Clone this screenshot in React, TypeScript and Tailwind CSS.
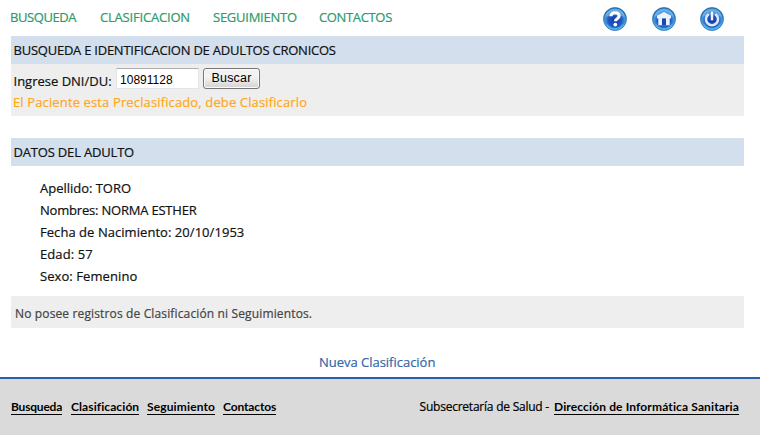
import type { ReactNode } from "react";

const nav = [
  { label: "BUSQUEDA", cls: "w-[90px] tracking-[-0.43px]" },
  { label: "CLASIFICACION", cls: "w-[113px] tracking-[-0.19px]" },
  { label: "SEGUIMIENTO", cls: "w-[106px] tracking-[-0.25px]" },
  { label: "CONTACTOS", cls: "tracking-[-0.35px]" },
];

const patient = [
  { text: "Apellido: TORO", cls: "tracking-[-0.02px]" },
  { text: "Nombres: NORMA ESTHER", cls: "tracking-[-0.2px]" },
  { text: "Fecha de Nacimiento: 20/10/1953", cls: "tracking-[0.05px]" },
  { text: "Edad: 57", cls: "tracking-[0.08px]" },
  { text: "Sexo: Femenino", cls: "tracking-[0.08px]" },
];

const footerLinks = [
  { label: "Busqueda", cls: "w-[60px] tracking-[-0.2px]" },
  { label: "Clasificación", cls: "w-[76px] tracking-[0.09px]" },
  { label: "Seguimiento", cls: "w-[76px] tracking-[0.13px]" },
  { label: "Contactos", cls: "tracking-[-0.13px]" },
];

function Orb({ id, children }: { id: string; children: ReactNode }) {
  return (
    <svg width="26" height="26" viewBox="0 0 26 26" fill="none">
      <defs>
        <radialGradient id={id} cx="0.5" cy="0.55" r="0.52">
          <stop offset="0" stopColor="#1238a4" />
          <stop offset="0.55" stopColor="#2159c2" />
          <stop offset="0.86" stopColor="#4a9ee2" />
          <stop offset="1" stopColor="#1d68a8" />
        </radialGradient>
      </defs>
      <circle cx="13" cy="13" r="11.5" fill={`url(#${id})`} stroke="#2a6ea8" strokeWidth="0.7" />
      <path d="M3.5 11C4 5.500 8 2.600 13 2.600S22 5.500 22.500 11C17 8.500 9 8.500 3.500 11Z" fill="#9ed4f5" opacity="0.4" />
      <path d="M4.500 18.500c4 6 13 6 17 0" stroke="#62c8f2" strokeWidth="1.800" opacity="0.6" />
      {children}
    </svg>
  );
}

function SectionBar({ children }: { children: ReactNode }) {
  return <h2 className="flex h-7 items-center bg-[#d3dfed] pl-[2.500px] tracking-[-0.24px] text-[#111]">{children}</h2>;
}

export default function App() {
  return (
    <div className="flex h-[435px] w-[760px] flex-col overflow-hidden bg-white font-['Open_Sans',sans-serif] text-[13px] leading-[18px] whitespace-nowrap text-[#111] [-webkit-text-stroke:0.2px]">
      <main className="ml-[11px] w-[733px]">
        <header className="flex h-9 justify-between">
          <nav className="-ml-px flex pt-[8px] text-[#2e9a6a]">
            {nav.map((n) => (
              <a key={n.label} className={n.cls}>{n.label}</a>
            ))}
          </nav>
          <div className="flex gap-[22.500px] pt-[6px] pr-[19px]">
            <Orb id="help">
              <path d="M8.900 10.300C8.900 7.900 10.600 6.700 13 6.700s4.100 1.200 4.100 3.300c0 2.700-3.700 2.600-3.700 5.200" stroke="white" strokeWidth="3.100" />
              <circle cx="13.300" cy="18.600" r="1.900" fill="white" />
            </Orb>
            <Orb id="home">
              <path d="M13 5.900 6 9.800v2.700h1.300v6.700h11.400v-6.700h1.300V9.800Z" fill="#e9f2ff" />
              <path d="M11 12.400h4v6.800h-4z" fill="#1c48ac" />
            </Orb>
            <Orb id="power">
              <path d="M9 8.800a6 6 0 1 0 8 0" stroke="#dceaff" strokeWidth="2.500" strokeLinecap="round" />
              <path d="M13 6.800v6.400" stroke="#eef5ff" strokeWidth="2.500" strokeLinecap="round" />
            </Orb>
          </div>
        </header>

        <SectionBar>BUSQUEDA E IDENTIFICACION DE ADULTOS CRONICOS</SectionBar>
        <section className="h-[52px] bg-[#eee] pt-[4px]">
          <div className="flex h-[25px] items-start">
            <label className="w-[105px] pt-[4px] pl-[2.500px]">Ingrese DNI/DU:</label>
            <input
              defaultValue="10891128"
              className="h-[21px] w-[83px] rounded-[1px] border border-[#e2e5ea] border-t-[#abadb3] bg-white px-[3px] pt-[2px] font-['Liberation_Sans',sans-serif] text-[12px] leading-4 tracking-[0.020px] text-black [-webkit-text-stroke:0]"
            />
            <button className="ml-[4px] h-[21px] w-[57px] rounded-[3px] border border-[#777] bg-linear-to-b from-[#f2f2f2] from-45% to-[#d2d2d2] font-['Liberation_Sans',sans-serif] text-[12.500px] leading-[17px] tracking-[0.200px] text-black shadow-[inset_0_0_0_1px_#fafafa] [-webkit-text-stroke:0]">
              Buscar
            </button>
          </div>
          <p className="pl-[2px] tracking-[0.13px] text-[#ffa81c]">El Paciente esta Preclasificado, debe Clasificarlo</p>
        </section>

        <div className="mt-[22px]">
          <SectionBar><span className="tracking-[-0.18px]">DATOS DEL ADULTO</span></SectionBar>
        </div>
        <ul className="mt-[11px] pl-[29px] leading-[22px]">
          {patient.map((p) => (
            <li key={p.text} className={p.cls}>{p.text}</li>
          ))}
        </ul>
        <p className="mt-[9px] flex h-8 items-center bg-[#eee] pt-[3px] pl-[4px] text-[12px] tracking-[0.140px] text-[#444]">
          No posee registros de Clasificación ni Seguimientos.
        </p>
        <p className="mt-[25px] pl-[308px] tracking-[-0.02px] text-[#3568a8]">Nueva Clasificación</p>
      </main>

      <footer className="mt-[6px] flex flex-1 justify-between border-t-2 border-[#2a62a8] bg-[#dadada] pt-[19px] pr-[21px] pl-[11px] text-[12px] text-black">
        <div className="flex font-['Lato',sans-serif] font-bold [-webkit-text-stroke:0]">
          {footerLinks.map((l) => (
            <div key={l.label} className={l.cls}>
              <a className="inline-block h-[17px] border-b border-black">{l.label}</a>
            </div>
          ))}
        </div>
        <p className="flex gap-[5px]">
          <span className="tracking-[-0.23px]">Subsecretaría de Salud -</span>
          <a className="h-[17px] border-b border-black font-['Lato',sans-serif] font-bold tracking-[0.130px] [-webkit-text-stroke:0]">Dirección de Informática Sanitaria</a>
        </p>
      </footer>
    </div>
  );
}
